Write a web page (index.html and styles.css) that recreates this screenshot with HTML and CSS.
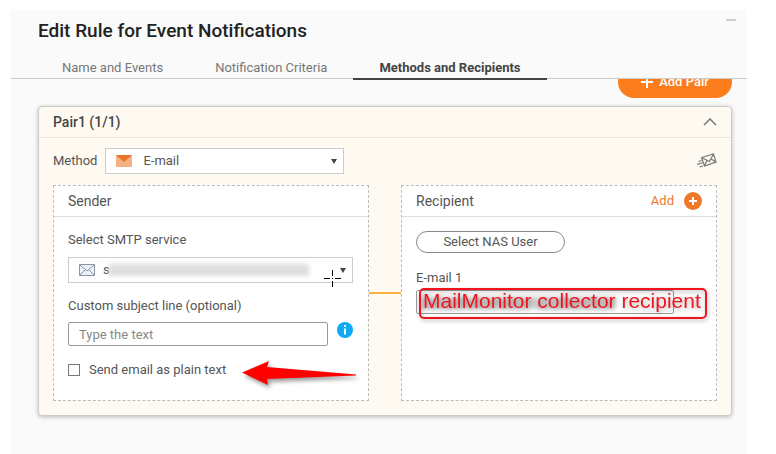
FILE: index.html
```html
<!DOCTYPE html>
<html lang="en">
<head>
  <meta charset="UTF-8">
  <title>Edit Rule for Event Notifications</title>
  <link rel="stylesheet" href="styles.css">
</head>
<body>
<div class="dialog">
  <header class="dialog-header">
    <div class="title-row">
      <h1>Edit Rule for Event Notifications</h1>
      <button type="button" class="minimize" aria-label="Minimize"></button>
    </div>
    <nav class="tabs">
      <a href="#" class="tab">Name and Events</a>
      <a href="#" class="tab">Notification Criteria</a>
      <a href="#" class="tab active">Methods and Recipients</a>
    </nav>
  </header>

  <main class="content">
    <button type="button" class="add-pair">
      <svg width="12" height="12" viewBox="0 0 12 12"><path d="M6 0v12M0 6h12" stroke="#fff" stroke-width="2"/></svg>
      Add Pair
    </button>

    <section class="card">
      <div class="card-head">
        <h2>Pair1 (1/1)</h2>
        <button type="button" class="icon-btn" aria-label="Collapse">
          <svg width="14" height="8" viewBox="0 0 14 8"><path d="M1 7l6-6 6 6" fill="none" stroke="#777" stroke-width="1.5"/></svg>
        </button>
      </div>

      <div class="card-body">
        <div class="method-row">
          <label for="method">Method</label>
          <div class="select-box method-select">
            <svg class="select-icon" width="16" height="12" viewBox="0 0 16 12"><path d="M0 0h16v12H0z" fill="#f4b183"/><path d="M0 0h16L8 7z" fill="#e8742a"/></svg>
            <select id="method"><option>E-mail</option></select>
          </div>
          <button type="button" class="icon-btn send-test" aria-label="Send test message">
            <svg width="20" height="16" viewBox="0 0 20 16" fill="none" stroke="#777" stroke-width="1.2"><path d="M4.500 4.500L16.500 1L19 9L7.500 13zM4.500 4.500l8 4 4-7.500M7.500 13l2.500-5.700M19 9l-4.900-3M1.500 8.500l3-1M0 11.500l5.500-1.800M2.500 14l3.500-1.200"/></svg>
          </button>
        </div>

        <div class="panels">
          <section class="panel">
            <div class="panel-head"><h3>Sender</h3></div>
            <div class="panel-body">
              <label for="smtp">Select SMTP service</label>
              <div class="select-box smtp-select">
                <svg class="select-icon" width="16" height="12" viewBox="0 0 16 12" fill="#eef2f8" stroke="#8793a5"><path d="M.5.5h15v11H.5z"/><path d="M1 1l7 6 7-6M1 11l5-5M15 11l-5-5" fill="none"/></svg>
                <select id="smtp"><option>s</option></select>
                <span class="redacted"></span>
                <svg class="crosshair" width="17" height="17" viewBox="0 0 17 17" stroke="#000"><path d="M8.500 0v6M8.500 11v6M0 8.500h6M11 8.500h6M8 8.500h1"/></svg>
              </div>

              <label for="subject">Custom subject line (optional)</label>
              <div class="subject-row">
                <input type="text" id="subject" placeholder="Type the text">
                <svg width="16" height="16" viewBox="0 0 16 16"><circle cx="8" cy="8" r="8" fill="#0caaf5"/><path d="M8 3v2M8 6.500v6" stroke="#fff" stroke-width="2"/></svg>
              </div>

              <div class="check-row">
                <input type="checkbox" id="plain">
                <label for="plain">Send email as plain text</label>
                <svg class="arrow" width="114" height="26" viewBox="0 0 114 26"><path d="M0 12.500L27 1l-2 6 89 7.500v1L25 19l1 6z" fill="#f00"/></svg>
              </div>
            </div>
          </section>

          <div class="connector"></div>

          <section class="panel">
            <div class="panel-head">
              <h3>Recipient</h3>
              <button type="button" class="add-btn">
                Add
                <svg width="18" height="18" viewBox="0 0 18 18"><circle cx="9" cy="9" r="9" fill="#f0782a"/><path d="M9 5v8M5 9h8" stroke="#fff" stroke-width="2"/></svg>
              </button>
            </div>
            <div class="panel-body">
              <button type="button" class="nas-user">Select NAS User</button>
              <label for="email1">E-mail 1</label>
              <div class="email-box">
                <input type="text" id="email1">
                <span class="smudge"></span>
                <div class="callout">MailMonitor collector recipient</div>
              </div>
            </div>
          </section>
        </div>
      </div>
    </section>
  </main>
</div>
</body>
</html>
```

FILE: styles.css
```css
* {
  box-sizing: border-box;
}

body {
  margin: 0;
  padding: 10px 29px 0 11px;
  background: #fff;
  color: #555;
  font: 13px/16px Roboto, sans-serif;
}

h1, h2, h3 {
  margin: 0;
  font-weight: 400;
}

button, input, select {
  font: inherit;
  color: inherit;
}

button {
  padding: 0;
  border: 0;
  background: none;
  cursor: pointer;
}

svg {
  display: block;
  flex: none;
}

.dialog {
  display: flex;
  flex-direction: column;
  min-height: calc(100vh - 10px);
  background: #fafafa;
}

.dialog-header {
  border-bottom: 1px solid #ccc;
}

.title-row {
  display: flex;
  justify-content: space-between;
  align-items: flex-start;
  height: 48px;
  padding: 9px 11px 0 27px;
}

.title-row h1 {
  color: #222;
  font-size: 19px;
  line-height: 24px;
  font-weight: 500;
}

.minimize {
  width: 10px;
  height: 2px;
  background: #ccc;
}

.tabs {
  display: flex;
  padding-left: 25px;
  margin-bottom: -2px;
}

.tab {
  height: 22px;
  padding: 2px 26px 0;
  border-bottom: 2px solid transparent;
  color: #777;
  text-decoration: none;
}

.tab.active {
  border-color: #444;
  color: #444;
  font-weight: 700;
}

.content {
  display: flex;
  flex-direction: column;
  flex: 1;
  overflow: hidden;
  padding: 0 15px 38px 27px;
}

/* partly scrolled under the header */
.add-pair {
  display: flex;
  justify-content: center;
  align-items: center;
  align-self: flex-end;
  gap: 6px;
  width: 114px;
  height: 32px;
  margin-top: -13px;
  border-radius: 16px;
  background: #fb7d1c;
  color: #fff;
  font-weight: 500;
}

.card {
  margin-top: 8px;
  border: 1px solid #ccc;
  border-radius: 4px;
  background: #fffaf1;
  box-shadow: 0 1px 4px rgba(0, 0, 0, 0.25);
}

.card-head {
  display: flex;
  justify-content: space-between;
  align-items: center;
  height: 31px;
  padding: 0 14px;
  border-bottom: 1px solid #e8e4dc;
}

.card-head h2 {
  color: #444;
  font-size: 14px;
  font-weight: 500;
}

.card-body {
  padding: 10px 14px 14px;
}

.method-row {
  display: flex;
  align-items: center;
  gap: 8px;
  margin-bottom: 11px;
}

.send-test {
  margin-left: auto;
}

.select-box {
  position: relative;
  border: 1px solid #ccc;
  background: #fff;
}

.select-box::after {
  content: "";
  position: absolute;
  top: 10px;
  right: 6px;
  border: 3px solid transparent;
  border-top: 5px solid #444;
  border-bottom: 0;
}

.select-box select {
  display: block;
  width: 100%;
  height: 24px;
  border: 0;
  background: none;
  appearance: none;
}

.select-icon {
  position: absolute;
  top: 6px;
  left: 10px;
}

.method-select {
  width: 239px;
}

.method-select select {
  padding-left: 37px;
}

.smtp-select select {
  padding-left: 34px;
}

.redacted {
  position: absolute;
  top: 6px;
  left: 40px;
  width: 200px;
  height: 12px;
  background: #ddd;
  filter: blur(2px);
}

.crosshair {
  position: absolute;
  top: 12px;
  right: 11px;
  z-index: 1;
}

.panels {
  display: flex;
}

.panel {
  flex: 1;
  min-width: 0;
  border: 1px dashed #bbb;
  background: #fff;
}

.panel-head {
  display: flex;
  justify-content: space-between;
  align-items: center;
  height: 31px;
  padding: 0 14px;
  border-bottom: 1px solid #ddd;
}

.panel-head h3 {
  font-size: 14px;
}

.panel-body {
  display: flex;
  flex-direction: column;
  padding: 15px 15px 22px 14px;
}

.panel-body > .select-box {
  margin: 9px 0 15px;
}

.subject-row {
  display: flex;
  gap: 9px;
  margin: 8px 0 16px;
}

.subject-row input {
  flex: 1;
  min-width: 0;
  height: 24px;
  padding: 0 10px;
  border: 1px solid #999;
  border-radius: 2px;
}

.subject-row input::placeholder {
  color: #888;
}

.check-row {
  display: flex;
  align-items: center;
  gap: 9px;
  position: relative;
}

.check-row input {
  width: 12px;
  height: 12px;
  margin: 0;
  border: 1px solid #777;
  background: #fff;
  appearance: none;
}

.arrow {
  position: absolute;
  top: -2px;
  left: 174px;
  filter: drop-shadow(2px 3px 2px rgba(0, 0, 0, 0.4));
}

.connector {
  align-self: center;
  width: 32px;
  height: 2px;
  background: #fbb040;
}

.add-btn {
  display: flex;
  align-items: center;
  gap: 10px;
  color: #f0782a;
}

.nas-user {
  width: 149px;
  height: 22px;
  margin: -1px 0 17px;
  border: 1px solid #888;
  border-radius: 11px;
}

.email-box {
  position: relative;
  margin-top: 4px;
}

.email-box input {
  display: block;
  width: 258px;
  height: 24px;
  border: 1px solid #999;
  border-radius: 2px;
}

.smudge {
  position: absolute;
  top: 7px;
  left: 4px;
  width: 196px;
  height: 12px;
  background: #ccc;
  filter: blur(2px);
}

.callout {
  position: absolute;
  top: -2px;
  left: 3px;
  height: 31px;
  padding: 0 4px 0 2px;
  border: 2px solid #f0141e;
  border-radius: 5px;
  color: #f0141e;
  font: 21px/21px "Liberation Sans", sans-serif;
  white-space: nowrap;
  filter: drop-shadow(1px 2px 2px rgba(0, 0, 0, 0.3));
}
```
